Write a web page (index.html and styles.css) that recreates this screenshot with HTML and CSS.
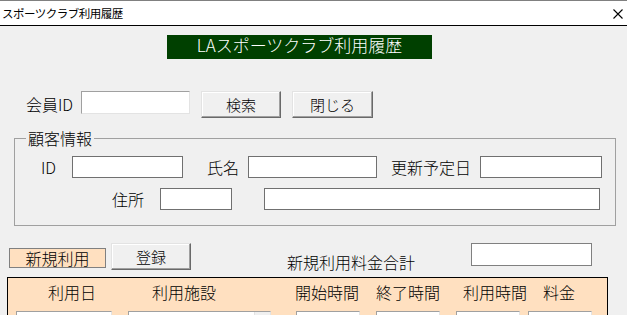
FILE: index.html
```html
<!DOCTYPE html>
<html lang="ja">
<head>
<meta charset="utf-8">
<title>スポーツクラブ利用履歴</title>
<link rel="stylesheet" href="styles.css">
</head>
<body>
<div class="titlebar">
  <span class="title">スポーツクラブ利用履歴</span>
  <svg class="close" viewBox="0 0 10 10" width="10" height="10"><path d="M0.5 0.5 L9.5 9.5 M9.5 0.5 L0.5 9.5" stroke="#000" stroke-width="1.1" fill="none"/></svg>
</div>

<div class="banner">LAスポーツクラブ利用履歴</div>

<div class="search-row">
  <span class="lbl lbl-member">会員ID</span>
  <input class="in-member" type="text">
  <button class="btn btn-search">検索</button>
  <button class="btn btn-close">閉じる</button>
</div>

<fieldset class="customer">
  <legend>顧客情報</legend>
  <div class="cust-row row1">
    <span class="lbl lbl-id">ID</span>
    <input class="field f-id" type="text">
    <span class="lbl lbl-name">氏名</span>
    <input class="field f-name" type="text">
    <span class="lbl lbl-renew">更新予定日</span>
    <input class="field f-renew" type="text">
  </div>
  <div class="cust-row row2">
    <span class="lbl lbl-addr">住所</span>
    <input class="field f-zip" type="text">
    <input class="field f-addr" type="text">
  </div>
</fieldset>

<div class="new-row">
  <div class="new-tag">新規利用</div>
  <button class="btn btn-register">登録</button>
  <span class="total-lbl">新規利用料金合計</span>
  <input class="total-in" type="text">
</div>

<div class="panel">
  <div class="heads">
    <span class="h h1">利用日</span>
    <span class="h h2">利用施設</span>
    <span class="h h3">開始時間</span>
    <span class="h h4">終了時間</span>
    <span class="h h5">利用時間</span>
    <span class="h h6">料金</span>
  </div>
  <div class="cells">
    <div class="cell c1"></div>
    <div class="cell c2"><div class="drop"></div></div>
    <div class="cell c3"></div>
    <div class="cell c4"></div>
    <div class="cell c5"></div>
    <div class="cell c6"></div>
  </div>
</div>
</body>
</html>
```

FILE: styles.css
```css
html, body {
  margin: 0;
  padding: 0;
}
body {
  background: #f0f0f0;
  font-family: "Noto Sans CJK JP", "Noto Sans", sans-serif;
  font-weight: 300;
  color: #000;
  width: 627px;
  height: 315px;
  overflow: hidden;
}
input, button {
  box-sizing: border-box;
  margin: 0;
  padding: 0;
  font-family: "Noto Sans CJK JP", "Noto Sans", sans-serif;
  font-weight: 300;
  outline: none;
}

.titlebar {
  display: flex;
  align-items: center;
  justify-content: space-between;
  height: 24px;
  background: #fff;
  border-top: 1px solid #808080;
  border-bottom: 1px solid #000;
  padding: 0 4px 0 2px;
}
.title {
  font-size: 11.5px;
  letter-spacing: -0.5px;
  line-height: 24px;
  font-weight: 400;
}
.close {
  display: block;
  margin-top: 1px;
}

.banner {
  margin: 9px 0 0 167px;
  width: 265px;
  height: 24px;
  background: #004000;
  color: #fff;
  font-size: 17px;
  line-height: 19px;
  text-align: center;
}

.lbl {
  font-size: 16px;
  line-height: 22px;
  white-space: nowrap;
}

.search-row {
  display: flex;
  align-items: flex-start;
  margin-top: 32px;
  padding-left: 26px;
}
.lbl-member {
  width: 55px;
  margin-top: 2px;
}
.in-member {
  width: 109px;
  height: 23px;
  background: #fff;
  border: 1px solid;
  border-color: #a0a0a0 #e3e3e3 #e3e3e3 #a0a0a0;
}
.btn {
  height: 27px;
  width: 80px;
  margin-left: 11px;
  font-size: 15px;
  line-height: 20px;
  color: #000;
  background: #f0f0f0;
  border: 1px solid;
  border-color: #e3e3e3 #696969 #696969 #e3e3e3;
  box-shadow: inset -1px -1px #a0a0a0, inset 1px 1px #fff;
}
.btn-close {
  width: 81px;
}

.customer {
  margin: 11px 0 0 14px;
  width: 602px;
  box-sizing: border-box;
  padding: 0 0 15px 0;
  border: 1px solid #a0a0a0;
  min-width: 0;
}
.customer legend {
  margin-left: 11px;
  padding: 0 2px;
  font-size: 16px;
  line-height: 19px;
}
.cust-row {
  display: flex;
  align-items: center;
  height: 22px;
}
.row1 {
  margin-top: 8px;
  padding-left: 26px;
}
.row2 {
  margin-top: 10px;
  padding-left: 97px;
}
.field {
  height: 22px;
  background: #fff;
  border: 1px solid #707070;
}
.lbl-id { width: 31px; }
.f-id { width: 111px; }
.lbl-name { width: 41px; margin-left: 24px; }
.f-name { width: 129px; }
.lbl-renew { width: 89px; margin-left: 14px; }
.f-renew { width: 122px; }
.lbl-addr { width: 48px; }
.f-zip { width: 72px; }
.f-addr { width: 336px; margin-left: 32px; }

.new-row {
  display: flex;
  align-items: flex-start;
  margin-top: 17px;
  padding-left: 9px;
}
.new-tag {
  box-sizing: border-box;
  margin-top: 5px;
  width: 97px;
  height: 20px;
  background: #ffe0c0;
  border: 1px solid #808080;
  font-size: 16px;
  line-height: 18px;
  text-align: center;
}
.btn-register {
  margin-left: 5px;
}
.total-lbl {
  margin: 9px 0 0 96px;
  width: 184px;
  font-size: 16px;
  line-height: 20px;
  white-space: nowrap;
}
.total-in {
  width: 121px;
  height: 23px;
  background: #fff;
  border: 1px solid #808080;
}

.panel {
  margin: 5px 0 0 7px;
  width: 601px;
  height: 40px;
  box-sizing: border-box;
  border: 1px solid #000;
  border-bottom: none;
  background: #ffe0c0;
  padding-top: 3px;
}
.heads {
  display: flex;
  padding-left: 40px;
  font-size: 16px;
  line-height: 22px;
  white-space: nowrap;
}
.h1 { width: 104px; }
.h2 { width: 143px; }
.h3 { width: 81px; }
.h4 { width: 87px; }
.h5 { width: 80px; }
.cells {
  display: flex;
  margin-top: 8px;
  padding-left: 8px;
}
.cell {
  box-sizing: border-box;
  height: 6px;
  width: 64px;
  margin-left: 16px;
  background: #fff;
  border: 1px solid;
  border-bottom: none;
  border-color: #a0a0a0 #e3e3e3 #e3e3e3 #a0a0a0;
  display: flex;
  justify-content: flex-end;
}
.c1 { width: 96px; margin-left: 0; }
.c2 { width: 143px; }
.c3 { margin-left: 25px; }
.c6 { margin-left: 8px; }
.drop {
  width: 16px;
  height: 100%;
  background: #f0f0f0;
  border-left: 1px solid #e3e3e3;
  box-sizing: border-box;
}
```
